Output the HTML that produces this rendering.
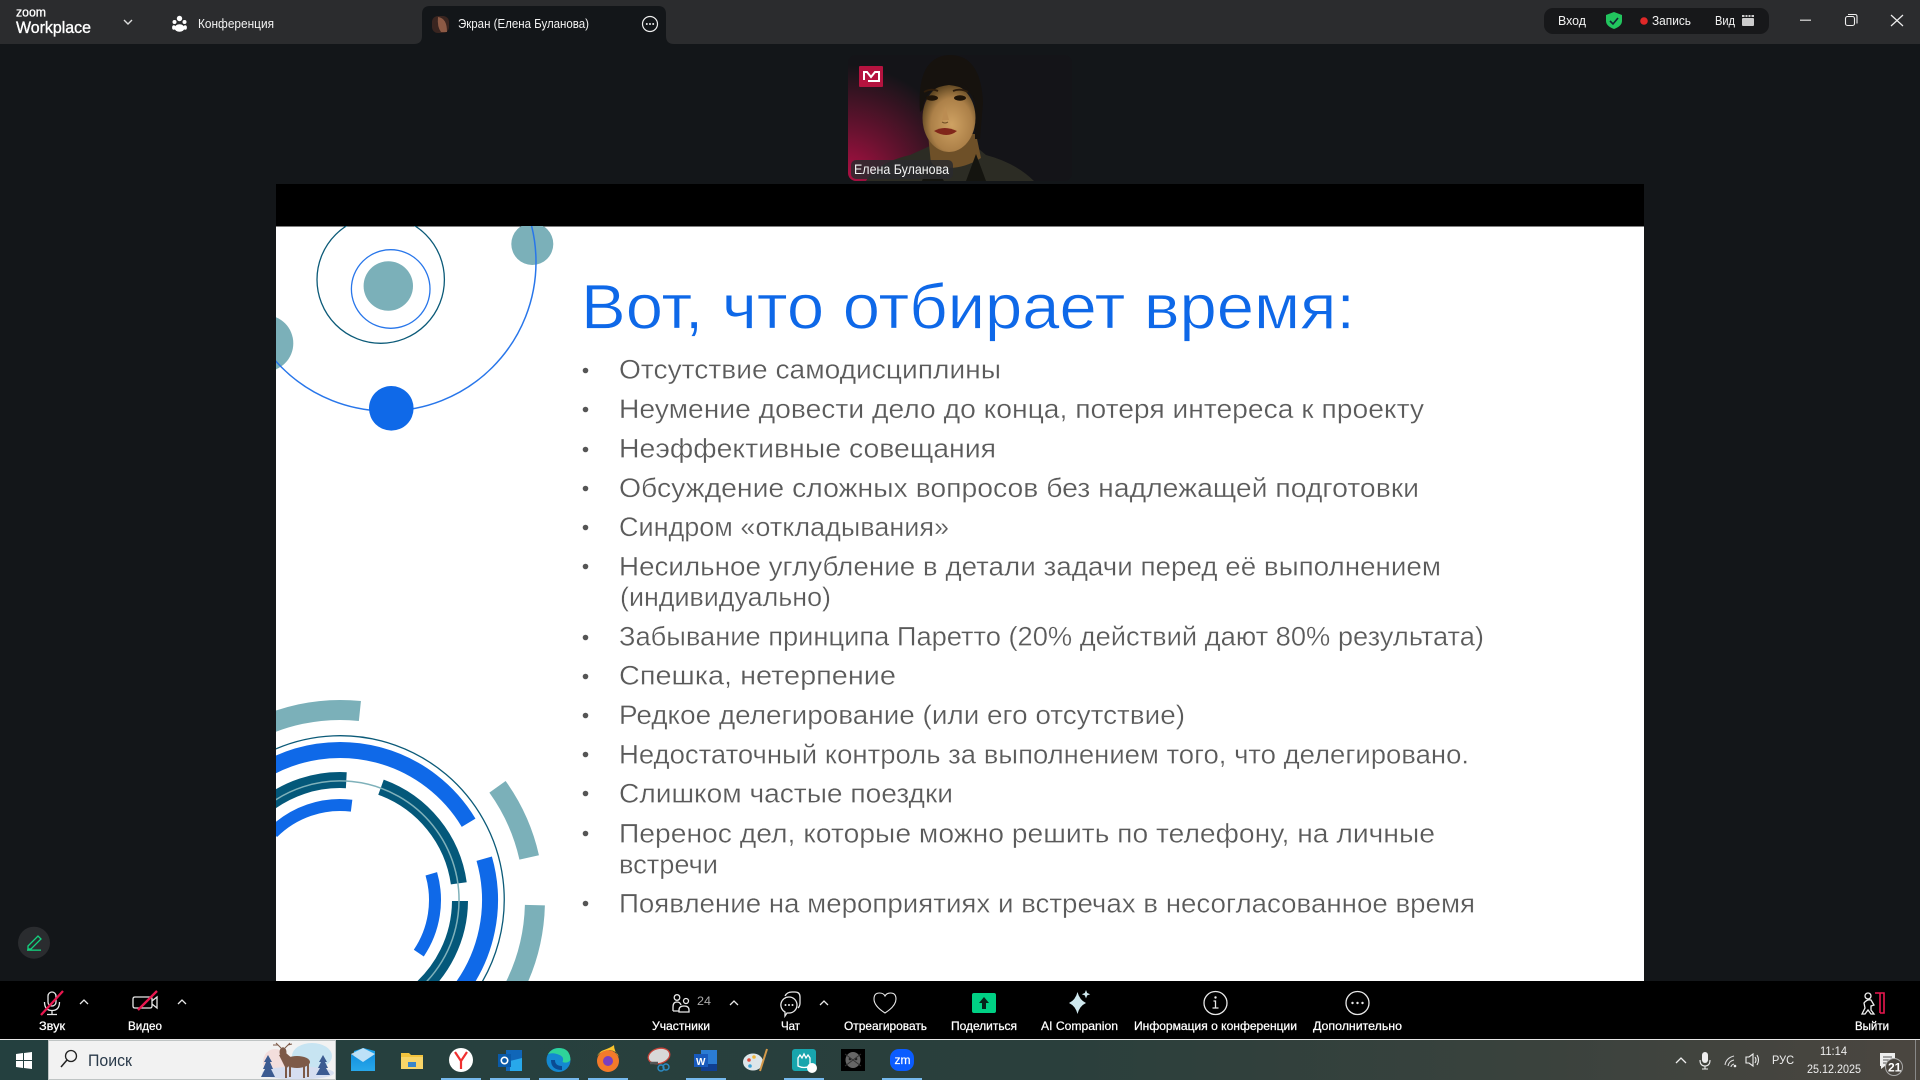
<!DOCTYPE html>
<html lang="ru"><head><meta charset="utf-8"><title>Zoom Workplace</title>
<style>
html,body{margin:0;padding:0;background:#131619;width:1920px;height:1080px;overflow:hidden}
svg{display:block;overflow:hidden}
text{font-family:"Liberation Sans","DejaVu Sans",sans-serif}
.b{font-size:27px;fill:#5a5a5a;stroke:#fff;stroke-width:.3}
.l{font-size:12px;fill:#fff;stroke:#fff;stroke-width:.25}
.t{font-size:12.5px;fill:#f2f2f2}
</style></head><body>
<svg width="1920" height="1080" viewBox="0 0 1920 1080" xmlns="http://www.w3.org/2000/svg">
<defs>
<clipPath id="sl"><rect x="276" y="226" width="1368" height="755"/></clipPath>
<clipPath id="vt"><rect x="848" y="55" width="224" height="126" rx="8"/></clipPath>
<radialGradient id="crim" gradientUnits="userSpaceOnUse" cx="845" cy="185" r="120"><stop offset="0" stop-color="#b80f46"/><stop offset=".45" stop-color="#6a1230"/><stop offset="1" stop-color="#141418"/></radialGradient>
<linearGradient id="tb" x1="0" x2="1" y1="0" y2="0"><stop offset="0" stop-color="#24403f"/><stop offset=".55" stop-color="#2a3f3c"/><stop offset=".8" stop-color="#3a423d"/><stop offset="1" stop-color="#4b4640"/></linearGradient>
<linearGradient id="mail" x1="0" y1="0" x2="0" y2="1"><stop offset="0" stop-color="#1490df"/><stop offset="1" stop-color="#28a8ea"/></linearGradient>
<radialGradient id="face" cx=".55" cy=".6" r=".6"><stop offset="0" stop-color="#cfa263"/><stop offset=".65" stop-color="#ac8048"/><stop offset="1" stop-color="#5c4420"/></radialGradient>
</defs>

<!-- top bar -->
<rect width="1920" height="44" fill="#2b2c2e"/>
<text x="16" y="16.500" font-size="12.500" fill="#fff" stroke="#fff" stroke-width=".3" textLength="30" lengthAdjust="spacingAndGlyphs">zoom</text>
<text x="16" y="33" font-size="17" fill="#fff" stroke="#fff" stroke-width=".35" textLength="75" lengthAdjust="spacingAndGlyphs">Workplace</text>
<polyline points="124,20 128,24 132,20" fill="none" stroke="#ddd" stroke-width="1.400"/>
<g fill="#fff"><circle cx="179.500" cy="18.500" r="2.700"/><circle cx="174.500" cy="22" r="2"/><circle cx="184.500" cy="22" r="2"/><ellipse cx="179.500" cy="28" rx="5" ry="3.800"/><ellipse cx="173.800" cy="27.500" rx="1.700" ry="2.300"/><ellipse cx="185.200" cy="27.500" rx="1.700" ry="2.300"/></g>
<text x="198" y="28" class="t" textLength="76" lengthAdjust="spacingAndGlyphs">Конференция</text>
<path d="M414 44 q8 0 8 -8 V14 q0 -8 8 -8 H658 q8 0 8 8 V36 q0 8 8 8 Z" fill="#131619"/>
<rect x="432" y="16" width="17" height="17" rx="6" fill="#3a2520"/><path d="M438 17 q9 1 9 15 h-6 q-4 -5 -3 -15z" fill="#8d5a45"/>
<text x="458" y="28" class="t" textLength="131" lengthAdjust="spacingAndGlyphs">Экран (Елена Буланова)</text>
<circle cx="650" cy="24" r="7.500" fill="none" stroke="#eee" stroke-width="1.200"/><g fill="#eee"><circle cx="646.800" cy="24" r="1"/><circle cx="650" cy="24" r="1"/><circle cx="653.200" cy="24" r="1"/></g>

<rect x="1544" y="8" width="225" height="26" rx="9" fill="#17181a"/>
<text x="1558" y="25" class="t" textLength="28" lengthAdjust="spacingAndGlyphs">Вход</text>
<path d="M1614 12 l8 3 v6 q0 5 -8 8 q-8 -3 -8 -8 v-6z" fill="#22c55e"/><polyline points="1610,21 1613,24 1618,18" fill="none" stroke="#123" stroke-width="1.600"/>
<circle cx="1644" cy="21" r="3.800" fill="#e02828"/>
<text x="1652" y="25" class="t" textLength="39" lengthAdjust="spacingAndGlyphs">Запись</text>
<text x="1715" y="25" class="t" textLength="20" lengthAdjust="spacingAndGlyphs">Вид</text>
<rect x="1742" y="18" width="12" height="8" rx="1" fill="#ccc"/><path d="M1742 15 h12 v2 h-12z" fill="#ccc"/><path d="M1745 15 v2 M1748 15 v2 M1751 15 v2" stroke="#17181a"/>
<rect x="1800" y="19.500" width="11" height="1.500" fill="#bbb"/>
<rect x="1845.500" y="16.500" width="9" height="9" rx="2" fill="none" stroke="#eee" stroke-width="1.100"/><path d="M1848 14.500 h7 q2 0 2 2 v7" fill="none" stroke="#eee" stroke-width="1.100"/>
<path d="M1891 15 L1903 26 M1903 15 L1891 26" stroke="#eee" stroke-width="1.200"/>

<!-- video tile -->
<g clip-path="url(#vt)">
<rect x="848" y="55" width="224" height="126" fill="#141418"/>
<rect x="848" y="55" width="224" height="126" fill="url(#crim)"/>
<path d="M866 181 q10 -18 44 -26 l22 -10 h42 l12 10 q30 8 48 26z" fill="#2c2c24"/>
<path d="M928 134 h48 l5 24 q-26 16 -50 6z" fill="#6e5028"/>
<path d="M930 160 l-8 21 h22z M976 154 l10 27 h-20z" fill="#14140f"/>
<path d="M920 112 q-4 -56 30 -57 q31 0 33 48 l-3 36 h-5 l0 -36 q-8 -22 -27 -20 q-22 2 -25 26z" fill="#16120e"/>
<ellipse cx="949" cy="118" rx="26.500" ry="34" fill="url(#face)"/>
<path d="M923 102 q3 -20 26 -22 q20 0 27 22 q-6 -15 -27 -17 q-20 2 -26 17z" fill="#16120e"/>
<g fill="none" stroke="#2e1d0c" stroke-width="1.800"><path d="M924 92 q7 -4 14 -1"/><path d="M953 91 q7 -3 15 1"/></g>
<g fill="#1f1408"><ellipse cx="932" cy="98" rx="6" ry="2.700"/><ellipse cx="960" cy="98" rx="6" ry="2.700"/></g>
<path d="M934 131 q10 -6 23 0 q-10 8 -23 0z" fill="#80261a"/>
<path d="M945 106 l-3 14 h7z" fill="#bb8c52"/>
<path d="M942 122 q3 2 6 0" fill="none" stroke="#6b4a22" stroke-width="1"/>
</g>
<rect x="859" y="66" width="24" height="21" rx="1" fill="#b5133f"/><path d="M864 80 V72 h3 l4 5 l4 -5 h4 v9 h-11" fill="none" stroke="#fff" stroke-width="2"/>
<rect x="851" y="160" width="102" height="19" rx="5" fill="#2a2a2e" fill-opacity=".85"/>
<text x="854" y="174" font-size="14" fill="#f4f4f4" textLength="95" lengthAdjust="spacingAndGlyphs">Елена Буланова</text>

<!-- slide -->
<rect x="276" y="184" width="1368" height="43" fill="#000"/>
<rect x="276" y="226.500" width="1368" height="754.500" fill="#fff"/>
<g clip-path="url(#sl)" fill="none">
<circle cx="532.300" cy="244" r="21" fill="#7bb0b9"/>
<circle cx="265" cy="343.300" r="28.300" fill="#7bb0b9"/>
<circle cx="387" cy="262" r="149" stroke="#2876ea" stroke-width="1.500"/>
<circle cx="380.700" cy="279.600" r="63.700" stroke="#0b5a78" stroke-width="1.300"/>
<circle cx="390.700" cy="289" r="39.300" stroke="#2876ea" stroke-width="1.300"/>
<circle cx="388.300" cy="286" r="24.700" fill="#7bb0b9"/>
<circle cx="391.300" cy="408.300" r="22.300" fill="#0f69e8"/>

<path d="M224 784 A164 164 0 0 1 473.700 995" stroke="#0b5a78" stroke-width="1.300"/>
<g stroke="#7bb0b9" stroke-width="20">
<path d="M245 735.500 A190 190 0 0 1 359.900 711"/>
<path d="M497.500 786.800 A194 194 0 0 1 529.200 857.400"/>
<path d="M534.900 905.100 A195 195 0 0 1 510.300 995"/>
</g>
<g stroke="#0f69e8" stroke-width="16">
<path d="M265 770.100 A150 150 0 0 1 468.600 822.700"/>
<path d="M484.200 858.700 A150 150 0 0 1 456.100 995"/>
</g>
<g stroke="#04587a" stroke-width="16">
<path d="M262.900 808.100 A120 120 0 0 1 346.300 780.200"/>
<path d="M381 787.200 A120 120 0 0 1 458.800 883.300"/>
<path d="M460 901 A120 120 0 0 1 413.500 995"/>
</g>
<path d="M263.500 808.800 A119 119 0 1 1 411.600 995" stroke="#7fb1ba" stroke-width="1.500"/>
<g stroke="#0f69e8" stroke-width="12">
<path d="M272.800 832.800 A95 95 0 0 1 351.600 805.700"/>
<path d="M431.300 873.800 A95 95 0 0 1 418.800 953.100"/>
</g>
</g>

<text x="581" y="328.500" font-size="63" fill="#0e68e8" stroke="#fff" stroke-width=".7" textLength="774" lengthAdjust="spacingAndGlyphs">Вот, что отбирает время:</text>
<g fill="#555"><circle cx="585.500" cy="370.500" r="2.800"/><circle cx="585.500" cy="409.500" r="2.800"/><circle cx="585.500" cy="449.500" r="2.800"/><circle cx="585.500" cy="488.500" r="2.800"/><circle cx="585.500" cy="527.500" r="2.800"/><circle cx="585.500" cy="566.500" r="2.800"/><circle cx="585.500" cy="637.500" r="2.800"/><circle cx="585.500" cy="676.500" r="2.800"/><circle cx="585.500" cy="715.500" r="2.800"/><circle cx="585.500" cy="754.500" r="2.800"/><circle cx="585.500" cy="793.500" r="2.800"/><circle cx="585.500" cy="833.500" r="2.800"/><circle cx="585.500" cy="903.500" r="2.800"/></g>
<text class="b" x="619" y="378.700" textLength="382" lengthAdjust="spacingAndGlyphs">Отсутствие самодисциплины</text>
<text class="b" x="619" y="418.200" textLength="805" lengthAdjust="spacingAndGlyphs">Неумение довести дело до конца, потеря интереса к проекту</text>
<text class="b" x="619" y="457.700" textLength="377" lengthAdjust="spacingAndGlyphs">Неэффективные совещания</text>
<text class="b" x="619" y="497.200" textLength="800" lengthAdjust="spacingAndGlyphs">Обсуждение сложных вопросов без надлежащей подготовки</text>
<text class="b" x="619" y="536.200" textLength="330" lengthAdjust="spacingAndGlyphs">Синдром «откладывания»</text>
<text class="b" x="619" y="575.700" textLength="822" lengthAdjust="spacingAndGlyphs">Несильное углубление в детали задачи перед её выполнением</text>
<text class="b" x="620" y="606.200" textLength="211" lengthAdjust="spacingAndGlyphs">(индивидуально)</text>
<text class="b" x="619" y="645.700" textLength="865" lengthAdjust="spacingAndGlyphs">Забывание принципа Паретто (20% действий дают 80% результата)</text>
<text class="b" x="619" y="684.700" textLength="277" lengthAdjust="spacingAndGlyphs">Спешка, нетерпение</text>
<text class="b" x="619" y="724" textLength="566" lengthAdjust="spacingAndGlyphs">Редкое делегирование (или его отсутствие)</text>
<text class="b" x="619" y="763.400" textLength="850" lengthAdjust="spacingAndGlyphs">Недостаточный контроль за выполнением того, что делегировано.</text>
<text class="b" x="619" y="802.700" textLength="334" lengthAdjust="spacingAndGlyphs">Слишком частые поездки</text>
<text class="b" x="619" y="842.400" textLength="816" lengthAdjust="spacingAndGlyphs">Перенос дел, которые можно решить по телефону, на личные</text>
<text class="b" x="619" y="873.400" textLength="99" lengthAdjust="spacingAndGlyphs">встречи</text>
<text class="b" x="619" y="912.400" textLength="856" lengthAdjust="spacingAndGlyphs">Появление на мероприятиях и встречах в несогласованное время</text>

<!-- pencil -->
<circle cx="34" cy="942.700" r="16" fill="#2a2c2f"/>
<path d="M28 946 l10 -10 l3 3 l-10 10 h-3z" fill="none" stroke="#14d27f" stroke-width="1.300"/><rect x="27" y="949.500" width="14" height="1.300" fill="#14d27f"/>

<!-- bottom bar -->
<rect x="0" y="981" width="1920" height="58" fill="#000"/>
<rect x="0" y="1039" width="1920" height="1.200" fill="#e8e8e8"/>
<g fill="none" stroke="#e8e8e8" stroke-width="1.300">
<rect x="48" y="992" width="8" height="14" rx="4"/><path d="M44.500 1002 q0 8.500 7.500 8.500 q7.500 0 7.500 -8.500 M52 1010.500 v4 M47 1014.500 h10"/>
<path d="M135 997 h15 q2 0 2 2 v7 q0 2 -2 2 h-15 q-2 0 -2 -2 v-7 q0 -2 2 -2z M152 1001 l5 -4 v11 l-5 -4"/>
<polyline points="80,1004 84,1000 88,1004"/><polyline points="178,1004 182,1000 186,1004"/>
<polyline points="730,1005 734,1001 738,1005"/><polyline points="820,1005 824,1001 828,1005"/>
<circle cx="677" cy="997.500" r="2.800"/><circle cx="686" cy="1001" r="2.500"/><path d="M673 1011 v-4 q0 -5 4 -5 q3 0 4 3 M679 1012 h10 v-2 q0 -4 -5 -4 q-5 0 -5 4z M673 1011 h6"/>
<path d="M789 997 a8 8 0 0 1 0 16 q-1 0 -2 0 l-2 3 v-4 a8 8 0 0 1 4 -15z M785 996 q2 -4 7 -4 h3 q5 0 5 5 v6 q0 3 -2 5"/>
<path d="M885 1013 q-11 -7 -11 -14 q0 -6 5.500 -6 q4 0 5.500 3 q1.500 -3 5.500 -3 q5.500 0 5.500 6 q0 7 -11 14z" stroke-width="1.100"/>
<circle cx="1215.500" cy="1003" r="11.500"/><path d="M1213.500 1001 h2 v7 M1212.500 1008 h6"/><circle cx="1357.500" cy="1003" r="11.500"/>
</g>
<g fill="#e8e8e8"><circle cx="785.500" cy="1005" r="1"/><circle cx="789" cy="1005" r="1"/><circle cx="792.500" cy="1005" r="1"/><circle cx="1215.500" cy="997.500" r="1.200"/><circle cx="1352.500" cy="1003" r="1.200"/><circle cx="1357.500" cy="1003" r="1.200"/><circle cx="1362.500" cy="1003" r="1.200"/></g>
<path d="M41 1015 L63 991 M138 1010 L157 991" stroke="#e8174f" stroke-width="2.300"/>
<rect x="972" y="993" width="24" height="20" rx="2" fill="#00d084"/><path d="M984 997 l5 6 h-3 v6 h-4 v-6 h-3z" fill="#06231a"/>
<path d="M1077.500 992 q2 8 8.500 11 q-6.500 3 -8.500 11 q-2 -8 -8.500 -11 q6.500 -3 8.500 -11z" fill="#cfe8ee"/><path d="M1086 990 l1.200 3 l3 1.200 l-3 1.200 l-1.200 3 l-1.200 -3 l-3 -1.200 l3 -1.200z" fill="#cfe8ee"/>
<text x="697" y="1005" font-size="12" fill="#aaa" textLength="14" lengthAdjust="spacingAndGlyphs">24</text>
<text class="l" x="39" y="1030" textLength="26" lengthAdjust="spacingAndGlyphs">Звук</text>
<text class="l" x="128" y="1030" textLength="34" lengthAdjust="spacingAndGlyphs">Видео</text>
<text class="l" x="652" y="1030" textLength="58" lengthAdjust="spacingAndGlyphs">Участники</text>
<text class="l" x="781" y="1030" textLength="19" lengthAdjust="spacingAndGlyphs">Чат</text>
<text class="l" x="844" y="1030" textLength="83" lengthAdjust="spacingAndGlyphs">Отреагировать</text>
<text class="l" x="951" y="1030" textLength="66" lengthAdjust="spacingAndGlyphs">Поделиться</text>
<text class="l" x="1041" y="1030" textLength="77" lengthAdjust="spacingAndGlyphs">AI Companion</text>
<text class="l" x="1134" y="1030" textLength="163" lengthAdjust="spacingAndGlyphs">Информация о конференции</text>
<text class="l" x="1313" y="1030" textLength="89" lengthAdjust="spacingAndGlyphs">Дополнительно</text>
<text class="l" x="1855" y="1030" textLength="34" lengthAdjust="spacingAndGlyphs">Выйти</text>
<path d="M1875 993 h9 v20 h-4" fill="none" stroke="#e8174f" stroke-width="1.600"/><path d="M1880 993 v20" stroke="#e8174f" stroke-width="1.600"/>
<circle cx="1868" cy="996" r="3" fill="none" stroke="#eee" stroke-width="1.300"/><path d="M1864 1003 q3 -4 7 -3 l3 5 l-3 1 v4 l3 4 h-3 l-3 -4 l-3 4 h-3 l3 -6 z" fill="none" stroke="#eee" stroke-width="1.300"/>

<!-- taskbar -->
<rect x="0" y="1040" width="1920" height="40" fill="url(#tb)"/>
<path d="M16 1054 l7 -1 v7 h-7z M24 1053 l8 -1 v8 h-8z M16 1061 h7 v7 l-7 -1z M24 1061 h8 v8 l-8 -1z" fill="#fff"/>
<rect x="48.500" y="1040.500" width="287" height="39" fill="#f2f2f2" stroke="#bfc4c4"/>
<circle cx="71" cy="1056" r="5.500" fill="none" stroke="#222" stroke-width="1.300"/><path d="M67 1060 L61 1067" stroke="#222" stroke-width="1.500"/>
<text x="88" y="1066" font-size="17" fill="#2a3a4a" textLength="44" lengthAdjust="spacingAndGlyphs">Поиск</text>
<!-- deer scene -->
<ellipse cx="275" cy="1062" rx="12" ry="13" fill="#f3dedc"/>
<ellipse cx="312" cy="1056" rx="20" ry="13" fill="#c7e4f2"/>
<ellipse cx="298" cy="1073" rx="36" ry="6.500" fill="#d6def0"/>
<path d="M266 1077 l-5 0 l4 -8 l-2 0 l3 -7 l-2 0 l4 -7 l4 7 l-2 0 l3 7 l-2 0 l4 8z M322 1075 l-6 0 l4 -7 l-2 0 l3 -6 l-2 0 l4 -7 l4 7 l-2 0 l3 6 l-2 0 l4 7z" fill="#3c5b91"/>
<g fill="#7d5a48"><ellipse cx="297" cy="1062" rx="13" ry="6"/><path d="M279 1055 l7 -2 l8 7 l-8 9z"/><ellipse cx="283" cy="1052" rx="3.500" ry="4.800"/><rect x="285" y="1064" width="2" height="14"/><rect x="289" y="1064" width="2" height="13"/><rect x="303" y="1064" width="2" height="14"/><rect x="307" y="1063" width="2" height="14"/></g>
<path d="M281 1048 L276 1043 M278 1045 L273 1045 M285 1048 L290 1043 M288 1045 L292 1044" fill="none" stroke="#7d5a48" stroke-width="1"/>
<path d="M354 1051 l9.500 -3 l11.500 3 v20 h-21z" fill="#1aa0e8"/><path d="M351 1054 l12 8 l12 -8 v17 h-24z" fill="url(#mail)"/><path d="M351 1054 l12 8 l12 -8 l-12 -6z" fill="#cfe8fa" opacity=".9"/>
<path d="M401 1053 h8 l2 2 h12 v14 h-22z" fill="#f3c43e"/><rect x="401" y="1057" width="22" height="12" fill="#f8d568"/><rect x="408" y="1062" width="8" height="5" fill="#3a86c8"/>
<circle cx="461" cy="1060" r="12" fill="#fff"/><path d="M455 1052 l6 9 l6 -9 M461 1061 v8" fill="none" stroke="#f03030" stroke-width="2.200"/>
<rect x="506" y="1050" width="16" height="21" fill="#1066b8"/><path d="M510 1061 l12 -3 v13 h-12z" fill="#28a8ea"/><rect x="498" y="1054" width="13" height="13" fill="#0a5aa8"/><circle cx="504.500" cy="1060.500" r="3.200" fill="none" stroke="#fff" stroke-width="1.600"/>
<circle cx="558.500" cy="1060" r="12" fill="#1488d0"/><path d="M548 1054 q4 -6 11 -6 q11 0 11.500 12 q-3 4 -8 2 q2 -5 -3 -7 q-6 -3 -11.500 -1z" fill="#2ed39a"/><path d="M553 1060 q0 8 9 8" fill="none" stroke="#0a4a92" stroke-width="4"/>
<circle cx="608" cy="1061" r="11" fill="#f37a2a"/><path d="M597 1056 q3 -5 7 -6 q8 -3 10 -5 q0 6 5 12 q-2 -6 -9 -7 q-8 0 -13 6z" fill="#fcc42c"/><circle cx="608" cy="1061" r="5" fill="#7a3fc0"/>
<ellipse cx="659" cy="1056" rx="11" ry="7.500" fill="#d8d8d8" stroke="#c8443a" stroke-width="1.300" transform="rotate(-15 659 1056)"/><path d="M650 1063 h8" stroke="#555" stroke-width="2.500"/><circle cx="666" cy="1067" r="3" fill="none" stroke="#2b8cc6" stroke-width="1.400"/><circle cx="661" cy="1068" r="3" fill="none" stroke="#2b8cc6" stroke-width="1.400"/>
<rect x="701" y="1050" width="16" height="21" fill="#2b7cd3"/><rect x="701" y="1064" width="16" height="7" fill="#103f91"/><rect x="694" y="1054" width="14" height="13" fill="#185abd"/><text x="696" y="1065" font-size="10" font-weight="700" fill="#fff">W</text>
<ellipse cx="753" cy="1062" rx="10" ry="8.500" fill="#dde6ea"/><circle cx="749" cy="1060" r="1.800" fill="#e04a3a"/><circle cx="754" cy="1057" r="1.800" fill="#f0b53a"/><circle cx="750" cy="1066" r="1.800" fill="#3aa3d8"/><path d="M760 1071 L767 1049" stroke="#d49a4a" stroke-width="2"/>
<rect x="792" y="1049" width="24" height="22" rx="3" fill="#18a5ad"/><path d="M798 1066 v-8 l2 -3 l2 3 l2 -4 l2 4 l2 -3 l2 3 v8 q-6 3 -12 0z" fill="none" stroke="#fff" stroke-width="1.300"/><circle cx="812" cy="1068" r="5" fill="#fff"/>
<rect x="841" y="1049" width="24" height="22" fill="#000"/><ellipse cx="853" cy="1060" rx="7.500" ry="8" fill="#666"/><circle cx="850" cy="1059" r="1.300" fill="#222"/><circle cx="856" cy="1059" r="1.300" fill="#222"/><path d="M845 1054 L861 1066 M861 1054 L845 1066" stroke="#333"/>
<rect x="890" y="1049" width="24" height="22" rx="9" fill="#0b5cff"/><text x="894.500" y="1064" font-size="12" fill="#fff" stroke="#fff" stroke-width=".2">zm</text>
<g fill="#76b9ed"><rect x="441" y="1078" width="40" height="2"/><rect x="490" y="1078" width="40" height="2"/><rect x="539" y="1078" width="40" height="2"/><rect x="588" y="1078" width="40" height="2"/><rect x="686" y="1078" width="40" height="2"/><rect x="784" y="1078" width="40" height="2"/><rect x="882" y="1078" width="40" height="2"/></g>
<polyline points="1676,1063 1681,1058 1686,1063" fill="none" stroke="#eee" stroke-width="1.300"/>
<rect x="1702" y="1052" width="6" height="11" rx="3" fill="#eee"/><path d="M1700 1060 q0 6 5 6 q5 0 5 -6 M1705 1066 v3 M1702 1069 h6" fill="none" stroke="#eee" stroke-width="1.100"/>
<path d="M1725 1065 q1 -7 9 -9 M1728 1066 q1 -5 6 -6 M1731 1067 q0 -2 3 -3" fill="none" stroke="#ddd" stroke-width="1.100"/><circle cx="1735" cy="1066" r="1.300" fill="#eee"/>
<path d="M1746 1057 h3 l4 -3 v12 l-4 -3 h-3z M1755 1057 q2 3 0 6 M1757 1055 q3 5 0 10" fill="none" stroke="#eee" stroke-width="1.100"/>
<text x="1772" y="1064" font-size="12" fill="#eee" textLength="22" lengthAdjust="spacingAndGlyphs">РУС</text>
<text x="1820" y="1055" font-size="12" fill="#eee" textLength="27" lengthAdjust="spacingAndGlyphs">11:14</text>
<text x="1807" y="1073" font-size="12" fill="#eee" textLength="54" lengthAdjust="spacingAndGlyphs">25.12.2025</text>
<path d="M1880 1053 h15 v13 h-10 l-4 3 v-3 h-1z" fill="#eee"/><path d="M1883 1057 h9 M1883 1060 h9 M1883 1063 h6" stroke="#555"/>
<circle cx="1894" cy="1067" r="8.500" fill="#4a4640" stroke="#aaa"/><text x="1888" y="1071.500" font-size="12" font-weight="700" fill="#fff">21</text>
<rect x="1915" y="1040" width="1" height="40" fill="#888"/>
</svg>
</body></html>
